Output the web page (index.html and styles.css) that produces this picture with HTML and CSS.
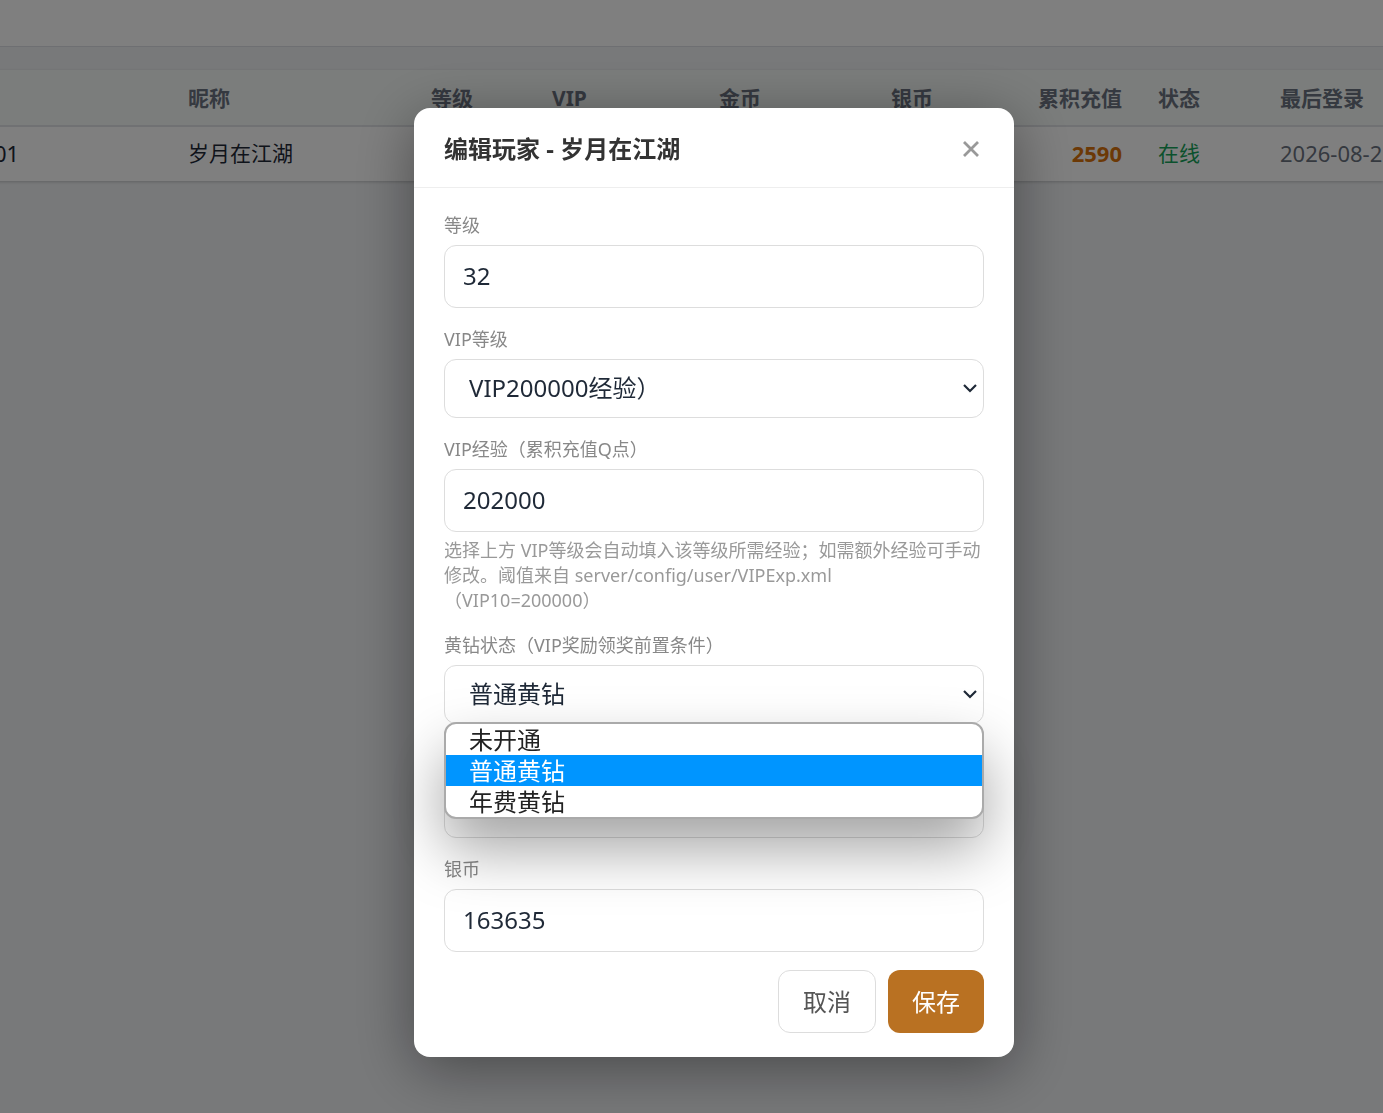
FILE: index.html
```html
<!DOCTYPE html>
<html lang="zh-CN">
<head>
  <meta charset="utf-8">
  <meta name="viewport" content="width=device-width, initial-scale=1">
  <title>编辑玩家</title>
  <link rel="stylesheet" href="styles.css">
</head>
<body>
  <header class="topbar"></header>
  <main class="content">
    <table class="players">
      <colgroup>
        <col class="col-id"><col class="col-name"><col class="col-level"><col class="col-vip">
        <col class="col-gold"><col class="col-silver"><col class="col-total"><col class="col-status"><col>
      </colgroup>
      <thead>
        <tr>
          <th></th>
          <th>昵称</th>
          <th>等级</th>
          <th>VIP</th>
          <th class="num">金币</th>
          <th class="num">银币</th>
          <th class="num">累积充值</th>
          <th>状态</th>
          <th>最后登录</th>
        </tr>
      </thead>
      <tbody>
        <tr>
          <td class="latin">01</td>
          <td>岁月在江湖</td>
          <td></td>
          <td></td>
          <td></td>
          <td></td>
          <td class="num latin total">2590</td>
          <td class="online">在线</td>
          <td class="latin date">2026-08-2</td>
        </tr>
      </tbody>
    </table>
  </main>

  <div class="overlay">
    <form class="modal" role="dialog" aria-labelledby="modal-title">
      <div class="modal-header">
        <h2 class="modal-title" id="modal-title">编辑玩家 - 岁月在江湖</h2>
        <button class="close" type="button" aria-label="关闭">
          <svg width="16" height="16" viewBox="0 0 16 16" fill="none" stroke="currentColor" stroke-width="2.8"><path d="M1 1l14 14M15 1L1 15"/></svg>
        </button>
      </div>
      <div class="modal-body">
        <div class="field">
          <label for="level">等级</label>
          <input class="control" id="level" type="text" value="32">
        </div>
        <div class="field">
          <label for="vip">VIP等级</label>
          <div class="select-wrap">
            <select class="control select" id="vip"><option>VIP200000经验）</option></select>
            <svg class="chevron" width="14" height="9" viewBox="0 0 14 9" fill="none" stroke="currentColor" stroke-width="2.2"><path d="M1 1l6 6 6-6"/></svg>
          </div>
        </div>
        <div class="field">
          <label for="exp">VIP经验（累积充值Q点）</label>
          <input class="control" id="exp" type="text" value="202000">
          <p class="hint">选择上方 VIP等级会自动填入该等级所需经验；如需额外经验可手动修改。阈值来自 server/config/user/VIPExp.xml<br>（VIP10=200000）</p>
        </div>
        <div class="field">
          <label for="diamond">黄钻状态（VIP奖励领奖前置条件）</label>
          <div class="select-wrap">
            <select class="control select" id="diamond">
              <option>未开通</option>
              <option selected>普通黄钻</option>
              <option>年费黄钻</option>
            </select>
            <svg class="chevron" width="14" height="9" viewBox="0 0 14 9" fill="none" stroke="currentColor" stroke-width="2.2"><path d="M1 1l6 6 6-6"/></svg>
            <ul class="options" role="listbox">
              <li role="option">未开通</li>
              <li role="option" class="active" aria-selected="true">普通黄钻</li>
              <li role="option">年费黄钻</li>
            </ul>
          </div>
        </div>
        <div class="field">
          <input class="control covered" type="text" aria-label="金币">
        </div>
        <div class="field">
          <label for="silver">银币</label>
          <input class="control" id="silver" type="text" value="163635">
        </div>
        <div class="actions">
          <button class="btn btn-cancel" type="button">取消</button>
          <button class="btn btn-save" type="submit">保存</button>
        </div>
      </div>
    </form>
  </div>
</body>
</html>
```
FILE: styles.css
```css
* {
  box-sizing: border-box;
}

body {
  margin: 0;
  min-height: 100vh;
  overflow: hidden;
  background: #f0f2f5;
  color: #1f2937;
  font-family: "Noto Sans", "Noto Sans CJK SC", sans-serif;
  font-size: 21px;
  text-spacing-trim: space-all;
}

.topbar {
  height: 47px;
  background: #fff;
  border-bottom: 1px solid #dcdfe4;
}

.content {
  padding: 23px 0 8px;
  overflow: hidden;
}

/* The list is scrolled sideways a little behind the dialog. */
.players {
  width: calc(100% + 24px);
  margin-left: -24px;
  table-layout: fixed;
  border-spacing: 0;
  background: #fff;
  box-shadow: 0 1px 3px rgba(0, 0, 0, 0.2);
}

.col-id { width: 194px; }
.col-name { width: 243px; }
.col-level { width: 121px; }
.col-vip { width: 105px; }
.col-gold { width: 140px; }
.col-silver { width: 172px; }
.col-total { width: 189px; }
.col-status { width: 122px; }

.players th,
.players td {
  height: 54px;
  padding: 0 18px 2px;
  line-height: 32px;
  text-align: left;
  white-space: nowrap;
}

.players th {
  height: 57px;
  padding-bottom: 0;
  background: #f6faf8;
  border-bottom: 2px solid #e0e2e6;
  color: #6b7280;
  font-weight: 700;
}

.players .num {
  text-align: right;
}

.players .latin {
  font-size: 22px;
}

.players .total {
  color: #d9730d;
  font-weight: 700;
}

.players .online {
  color: #16a35a;
}

.players .date {
  color: #6b7280;
}

.overlay {
  position: fixed;
  inset: 0 -45px -52px 0;
  display: flex;
  align-items: center;
  justify-content: center;
  background: rgba(0, 0, 0, 0.5);
}

.modal {
  width: 600px;
  max-width: 90%;
  background: #fff;
  border-radius: 16px;
  box-shadow: 0 12px 60px rgba(0, 0, 0, 0.4);
}

.modal-header {
  display: flex;
  align-items: center;
  justify-content: space-between;
  height: 80px;
  padding: 2px 30px 0;
  border-bottom: 1px solid #eee;
}

.modal-title {
  margin: 0;
  color: #333;
  font-size: 24px;
  line-height: 36px;
}

.close {
  display: flex;
  padding: 5px;
  border: 0;
  background: none;
  color: #999;
}

.modal-body {
  padding: 24px 30px;
}

.field {
  margin-bottom: 18px;
}

.field label {
  display: block;
  margin-bottom: 6px;
  color: #888;
  font-size: 18px;
  line-height: 27px;
}

.control {
  display: block;
  width: 100%;
  height: 63px;
  padding: 0 18px 2px;
  border: 1px solid #ddd;
  border-radius: 12px;
  background: #fff;
  color: #1f2937;
  font: inherit;
  font-size: 24px;
}

/* Leaves the room of a label above a field that the open list covers. */
.covered {
  margin-top: 51px;
}

.select-wrap {
  position: relative;
}

.select {
  height: 59px;
  padding: 0 24px 2px;
  appearance: none;
}

.chevron {
  position: absolute;
  top: 25px;
  right: 7px;
  color: #1f2937;
  pointer-events: none;
}

.options {
  position: absolute;
  top: 57px;
  left: 0;
  right: 0;
  margin: 0;
  padding: 0;
  overflow: hidden;
  list-style: none;
  background: #fff;
  border: 2px solid #aaa;
  border-radius: 12px;
  box-shadow: 0 30px 60px rgba(0, 0, 0, 0.36);
  color: #222;
  font-size: 24px;
  line-height: 31px;
}

.options li {
  padding: 0 23px;
}

.options .active {
  background: #0095ff;
  color: #fff;
}

.hint {
  margin: 6px 0 0;
  padding-bottom: 1px;
  color: #999;
  font-size: 18px;
  line-height: 25px;
}

.actions {
  display: flex;
  justify-content: flex-end;
  gap: 12px;
}

.btn {
  height: 63px;
  padding: 0 24px 2px;
  border: 0;
  border-radius: 12px;
  font: inherit;
  font-size: 24px;
}

.btn-cancel {
  border: 1px solid #ddd;
  background: #fff;
  color: #555;
}

.btn-save {
  background: #b97122;
  color: #fff;
}
```
